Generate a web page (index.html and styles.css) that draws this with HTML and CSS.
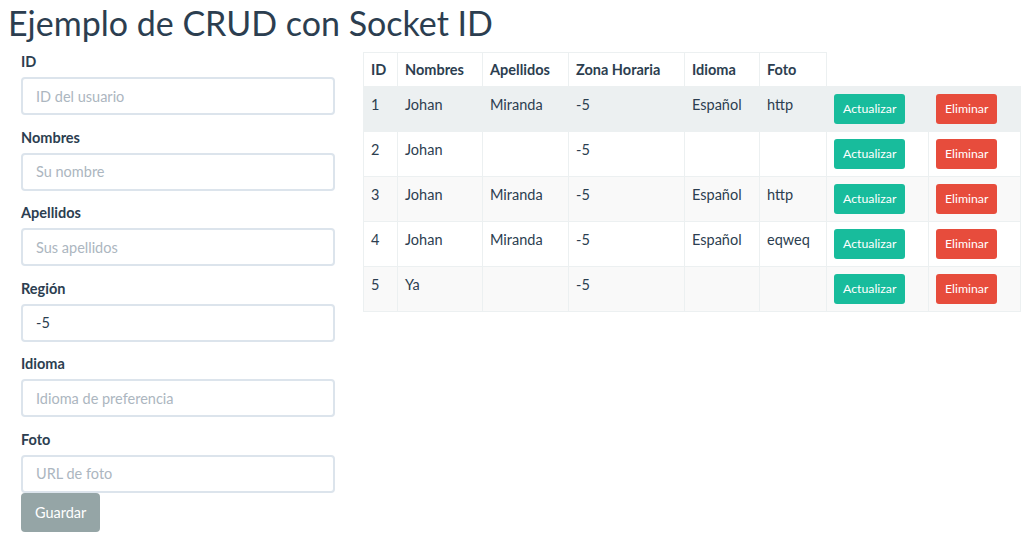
FILE: index.html
```html
<!DOCTYPE html>
<html lang="es">
<head>
<meta charset="utf-8">
<title>Ejemplo de CRUD con Socket ID</title>
<link rel="stylesheet" href="styles.css">
</head>
<body>
<h1 class="title">Ejemplo de CRUD con Socket ID</h1>
<div class="main">
  <form class="user-form">
    <div class="form-group">
      <label class="form-label">ID</label>
      <input class="form-control" type="text" placeholder="ID del usuario">
    </div>
    <div class="form-group">
      <label class="form-label">Nombres</label>
      <input class="form-control" type="text" placeholder="Su nombre">
    </div>
    <div class="form-group">
      <label class="form-label">Apellidos</label>
      <input class="form-control" type="text" placeholder="Sus apellidos">
    </div>
    <div class="form-group">
      <label class="form-label">Región</label>
      <input class="form-control" type="text" value="-5">
    </div>
    <div class="form-group">
      <label class="form-label">Idioma</label>
      <input class="form-control" type="text" placeholder="Idioma de preferencia">
    </div>
    <div class="form-group last">
      <label class="form-label">Foto</label>
      <input class="form-control" type="text" placeholder="URL de foto">
    </div>
    <button class="btn btn-default" type="button">Guardar</button>
  </form>
  <table class="users">
    <colgroup>
      <col class="c-id"><col class="c-nom"><col class="c-ape"><col class="c-zona"><col class="c-idioma"><col class="c-foto"><col class="c-act"><col class="c-del">
    </colgroup>
    <thead>
      <tr><th>ID</th><th>Nombres</th><th>Apellidos</th><th>Zona Horaria</th><th>Idioma</th><th>Foto</th></tr>
    </thead>
    <tbody>
      <tr class="hover"><td>1</td><td>Johan</td><td>Miranda</td><td>-5</td><td>Español</td><td>http</td><td><button class="btn btn-sm btn-success" type="button">Actualizar</button></td><td><button class="btn btn-sm btn-danger" type="button">Eliminar</button></td></tr>
      <tr><td>2</td><td>Johan</td><td></td><td>-5</td><td></td><td></td><td><button class="btn btn-sm btn-success" type="button">Actualizar</button></td><td><button class="btn btn-sm btn-danger" type="button">Eliminar</button></td></tr>
      <tr class="odd"><td>3</td><td>Johan</td><td>Miranda</td><td>-5</td><td>Español</td><td>http</td><td><button class="btn btn-sm btn-success" type="button">Actualizar</button></td><td><button class="btn btn-sm btn-danger" type="button">Eliminar</button></td></tr>
      <tr><td>4</td><td>Johan</td><td>Miranda</td><td>-5</td><td>Español</td><td>eqweq</td><td><button class="btn btn-sm btn-success" type="button">Actualizar</button></td><td><button class="btn btn-sm btn-danger" type="button">Eliminar</button></td></tr>
      <tr class="odd"><td>5</td><td>Ya</td><td></td><td>-5</td><td></td><td></td><td><button class="btn btn-sm btn-success" type="button">Actualizar</button></td><td><button class="btn btn-sm btn-danger" type="button">Eliminar</button></td></tr>
    </tbody>
  </table>
</div>
</body>
</html>
```

FILE: styles.css
```css
* { box-sizing: border-box; }

body {
  margin: 0;
  padding: 0 8px;
  font-family: Lato, "Open Sans", "Liberation Sans", sans-serif;
  font-size: 14.5px;
  line-height: 21px;
  color: #2c3e50;
  background: #ffffff;
}

.title {
  margin: 0 0 6px 0;
  font-size: 34px;
  line-height: 46px;
  font-weight: 400;
  color: #2c3e50;
}

.main {
  display: flex;
  align-items: flex-start;
  gap: 28px;
  padding-left: 13px;
}

.user-form {
  width: 314px;
  flex: 0 0 314px;
}

.form-group {
  margin-bottom: 12.6px;
}
.form-group.last {
  margin-bottom: 0;
}

.form-label {
  display: block;
  font-weight: 700;
  line-height: 20px;
  margin-bottom: 5px;
}

.form-control {
  display: block;
  width: 100%;
  height: 38px;
  padding: 0 13px;
  font-family: inherit;
  font-size: 14.5px;
  color: #2c3e50;
  background: #ffffff;
  border: 2px solid #dce4ec;
  border-radius: 4px;
  outline: none;
}
.form-control::placeholder {
  color: #acb6c0;
  opacity: 1;
}

.btn {
  display: inline-block;
  font-family: inherit;
  border: 0;
  color: #ffffff;
  cursor: pointer;
}
.btn-default {
  background: #95a5a6;
  font-size: 14.5px;
  line-height: 21px;
  padding: 9px 14px;
  border-radius: 4px;
}
.btn-sm {
  font-size: 12.3px;
  line-height: 20px;
  padding: 5px 9px;
  border-radius: 3px;
  vertical-align: top;
}
.btn-success { background: #18bc9c; }
.btn-danger { background: #e74c3c; }

.users {
  width: 657px;
  flex: 0 0 657px;
  border-collapse: collapse;
  table-layout: fixed;
}
.c-id { width: 34px; }
.c-nom { width: 85px; }
.c-ape { width: 86px; }
.c-zona { width: 116px; }
.c-idioma { width: 75px; }
.c-foto { width: 67px; }
.c-act { width: 102px; }
.c-del { width: 92px; }

.users th,
.users td {
  border: 1px solid #ecf0f1;
  text-align: left;
  vertical-align: top;
  white-space: nowrap;
}
.users th {
  font-weight: 700;
  padding: 6px 7px 6px;
}
.users td {
  padding: 7px 7px 7px;
}
.users tr.odd td { background: #f9f9f9; }
.users tr.hover td { background: #ecf0f1; }
```
